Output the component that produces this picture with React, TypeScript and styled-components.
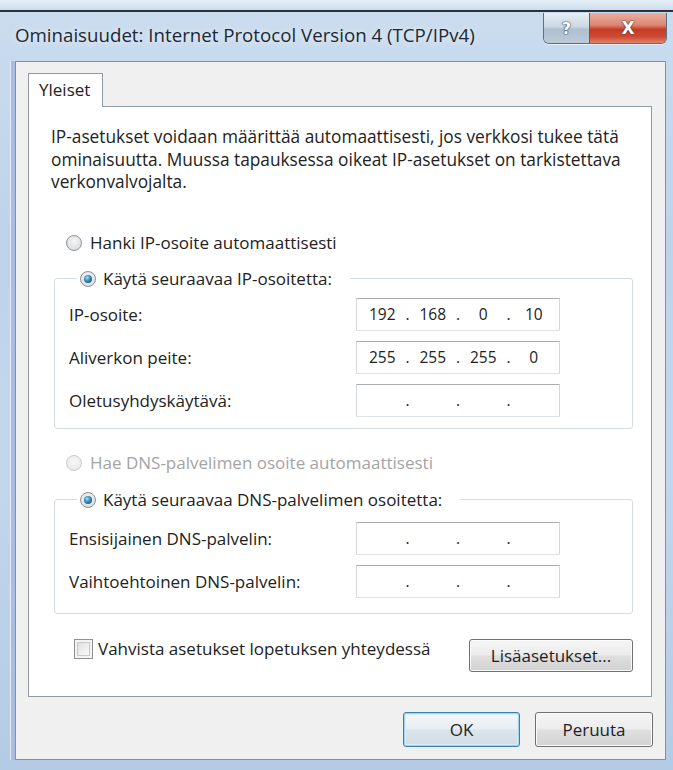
import React from "react";
import styled, { createGlobalStyle } from "styled-components";

const GlobalStyle = createGlobalStyle`
  html, body { margin: 0; padding: 0; }
  body {
    font-family: "Open Sans", "Noto Sans", "DejaVu Sans", sans-serif;
    background: #cfe0f0;
    color: #222222;
  }
  * { box-sizing: border-box; }
`;

const Screen = styled.div`
  width: 673px;
  height: 770px;
  display: flex;
  flex-direction: column;
  overflow: hidden;
`;

const TopStrip = styled.div`
  height: 12px;
  flex: none;
  background: linear-gradient(180deg, #e6eff7 0%, #cadced 100%);
  border-bottom: 2px solid #29323c;
`;

const Window = styled.div`
  flex: 1;
  display: flex;
  flex-direction: column;
  padding: 0 7px 10px 15px;
  background: linear-gradient(180deg, #cadcee 0%, #bed3ea 30%, #c3d7ec 60%, #b4cbe5 100%);
  min-height: 0;
`;

const TitleBar = styled.div`
  height: 49px;
  flex: none;
  display: flex;
  justify-content: space-between;
  align-items: flex-start;
`;

const Title = styled.div`
  margin-top: 10px;
  padding-left: 0;
  font-size: 18.7px;
  line-height: 26px;
  color: #1c2836;
  text-shadow: 0 0 6px rgba(255, 255, 255, 0.9);
  white-space: nowrap;
`;

const CaptionGroup = styled.div`
  display: flex;
  margin-top: 1px;
  margin-right: -1px;
  border: 1px solid #5d6f84;
  border-top: none;
  border-radius: 0 0 6px 6px;
  overflow: hidden;
  box-shadow: 0 1px 0 rgba(255, 255, 255, 0.6);
`;

const CaptionButton = styled.div<{ $variant: "help" | "close" }>`
  height: 30px;
  width: ${(p) => (p.$variant === "close" ? "77px" : "45px")};
  display: flex;
  align-items: center;
  justify-content: center;
  font-family: "DejaVu Sans", sans-serif;
  font-weight: bold;
  color: #ffffff;
  font-size: ${(p) => (p.$variant === "close" ? "17px" : "16px")};
  text-shadow: 0 0 2px #3a3a3a, 0 0 1px #222;
  background: ${(p) =>
    p.$variant === "close"
      ? "linear-gradient(180deg, #eab0a2 0%, #dc8672 40%, #c63a24 55%, #cf4b34 80%, #e0826c 100%)"
      : "linear-gradient(180deg, #e8eef4 0%, #ccd8e3 45%, #aebfcf 55%, #bdcbd8 100%)"};
  border-left: ${(p) => (p.$variant === "close" ? "1px solid #6b5a5a" : "none")};
`;

const Client = styled.div`
  flex: 1;
  display: flex;
  flex-direction: column;
  background: #f0f0f0;
  border: 1px solid #7d91a8;
  padding: 11px 13px 12px 12px;
  box-shadow: -4px 0 0 0 #a9bde2, -5px 0 0 0 #e4edf7;
  min-height: 0;
`;

const TabRow = styled.div`
  display: flex;
  position: relative;
  z-index: 1;
`;

const Tab = styled.div`
  width: 75px;
  height: 34px;
  background: #ffffff;
  border: 1px solid #8e9ba6;
  border-bottom: none;
  margin-bottom: -1px;
  padding-left: 10px;
  font-size: 17px;
  line-height: 32px;
`;

const Panel = styled.div`
  flex: 1;
  background: #ffffff;
  border: 1px solid #8e9ba6;
  padding: 19px 18px 0 22px;
  display: flex;
  flex-direction: column;
`;

const Intro = styled.p`
  margin: 0;
  font-size: 17.3px;
  line-height: 22.5px;
`;

const OptionRow = styled.label<{ $disabled?: boolean; $top: number }>`
  display: flex;
  align-items: center;
  gap: 8px;
  height: 24px;
  margin: ${(p) => p.$top}px 0 0 15px;
  font-size: 17px;
  color: ${(p) => (p.$disabled ? "#a4a4a4" : "#222222")};
`;

const Radio = styled.span<{ $checked?: boolean; $disabled?: boolean }>`
  width: 16px;
  height: 16px;
  flex: none;
  border-radius: 50%;
  border: 1px solid ${(p) => (p.$disabled ? "#cccccc" : "#8a949c")};
  background: ${(p) =>
    p.$disabled
      ? "radial-gradient(circle at 50% 40%, #f7f7f7 0%, #e6e6e6 100%)"
      : "radial-gradient(circle at 50% 40%, #f6f6f6 0%, #d6d6d6 100%)"};
  display: flex;
  align-items: center;
  justify-content: center;
  &::after {
    content: "";
    display: ${(p) => (p.$checked ? "block" : "none")};
    width: 8px;
    height: 8px;
    border-radius: 50%;
    background: radial-gradient(circle at 40% 35%, #a8e0f8 0%, #3a8dc0 40%, #123f62 100%);
  }
`;

const Group = styled.fieldset<{ $top: number; $padTop: number; $padBottom: number }>`
  margin: ${(p) => p.$top}px 0 0 3px;
  padding: ${(p) => p.$padTop}px 72px ${(p) => p.$padBottom}px 14px;
  border: 1px solid #d5dde3;
  border-radius: 3px;
  min-width: 0;
  display: grid;
  grid-template-columns: 1fr 204px;
  row-gap: 10px;
  align-items: center;
`;

const Legend = styled.legend`
  margin-left: 8px;
  padding: 0 18px 0 3px;
  height: 24px;
  display: flex;
  align-items: center;
  gap: 7px;
  font-size: 17px;
`;

const FieldLabel = styled.span`
  font-size: 17px;
`;

const IpBox = styled.div`
  height: 33px;
  display: flex;
  align-items: center;
  padding: 0 3px;
  background: #ffffff;
  border: 1px solid;
  border-color: #a9acb1 #d3d6db #dfe3e8 #d3d6db;
  border-radius: 1px;
  font-size: 15.5px;
`;

const Octet = styled.span`
  flex: 1;
  text-align: center;
`;

const Dot = styled.span`
  width: 6px;
  text-align: center;
`;

const BottomRow = styled.div`
  display: flex;
  justify-content: space-between;
  align-items: flex-start;
  margin-top: 23px;
`;

const CheckLabel = styled.label`
  display: flex;
  align-items: center;
  gap: 5px;
  height: 24px;
  margin-left: 23px;
  font-size: 17px;
`;

const CheckBox = styled.span`
  width: 19px;
  height: 20px;
  flex: none;
  border: 1px solid #8f8f8f;
  background: linear-gradient(135deg, #d8d8d8 0%, #f2f2f2 60%, #fafafa 100%);
  box-shadow: inset 0 0 0 2px #f4f4f4, inset 0 0 0 3px #c9c9c9;
`;

const Button = styled.div<{ $default?: boolean; $width: number; $height: number; $top: number }>`
  width: ${(p) => p.$width}px;
  height: ${(p) => p.$height}px;
  margin-top: ${(p) => p.$top}px;
  display: flex;
  align-items: center;
  justify-content: center;
  font-size: 17px;
  color: #1e1e1e;
  border: 1px solid ${(p) => (p.$default ? "#3b7fb3" : "#707070")};
  border-radius: 3px;
  background: ${(p) =>
    p.$default
      ? "linear-gradient(180deg, #f4f8fb 0%, #e8eef3 48%, #dbe4eb 52%, #d3dde5 100%)"
      : "linear-gradient(180deg, #f5f5f5 0%, #ececec 48%, #dfdfdf 52%, #d2d2d2 100%)"};
  box-shadow: ${(p) =>
    p.$default ? "inset 0 0 0 1px #9ed3f2, inset 0 0 0 2px #d8eefb" : "inset 0 0 0 1px #fbfbfb"};
`;

const Footer = styled.div`
  display: flex;
  justify-content: flex-end;
  gap: 15px;
  padding-top: 15px;
  margin-right: -1px;
`;

const Ip: React.FC<{ parts: string[] }> = ({ parts }) => (
  <IpBox>
    {parts.map((p, i) => (
      <React.Fragment key={i}>
        <Octet>{p}</Octet>
        {i < 3 && <Dot>.</Dot>}
      </React.Fragment>
    ))}
  </IpBox>
);

const empty = ["", "", "", ""];

export default function App() {
  return (
    <>
      <GlobalStyle />
      <Screen>
        <TopStrip />
        <Window>
          <TitleBar>
            <Title>Ominaisuudet: Internet Protocol Version 4 (TCP/IPv4)</Title>
            <CaptionGroup>
              <CaptionButton $variant="help">?</CaptionButton>
              <CaptionButton $variant="close">X</CaptionButton>
            </CaptionGroup>
          </TitleBar>
          <Client>
            <TabRow>
              <Tab>Yleiset</Tab>
            </TabRow>
            <Panel>
              <Intro>
                IP-asetukset voidaan määrittää automaattisesti, jos verkkosi tukee tätä
                ominaisuutta. Muussa tapauksessa oikeat IP-asetukset on tarkistettava
                verkonvalvojalta.
              </Intro>
              <OptionRow $top={37}>
                <Radio />
                Hanki IP-osoite automaattisesti
              </OptionRow>
              <Group $top={12} $padTop={7} $padBottom={11}>
                <Legend>
                  <Radio $checked />
                  Käytä seuraavaa IP-osoitetta:
                </Legend>
                <FieldLabel>IP-osoite:</FieldLabel>
                <Ip parts={["192", "168", "0", "10"]} />
                <FieldLabel>Aliverkon peite:</FieldLabel>
                <Ip parts={["255", "255", "255", "0"]} />
                <FieldLabel>Oletusyhdyskäytävä:</FieldLabel>
                <Ip parts={empty} />
              </Group>
              <OptionRow $top={22} $disabled>
                <Radio $disabled />
                Hae DNS-palvelimen osoite automaattisesti
              </OptionRow>
              <Group $top={13} $padTop={10} $padBottom={15}>
                <Legend>
                  <Radio $checked />
                  Käytä seuraavaa DNS-palvelimen osoitetta:
                </Legend>
                <FieldLabel>Ensisijainen DNS-palvelin:</FieldLabel>
                <Ip parts={empty} />
                <FieldLabel>Vaihtoehtoinen DNS-palvelin:</FieldLabel>
                <Ip parts={empty} />
              </Group>
              <BottomRow>
                <CheckLabel>
                  <CheckBox />
                  Vahvista asetukset lopetuksen yhteydessä
                </CheckLabel>
                <Button $width={164} $height={33} $top={2}>
                  Lisäasetukset...
                </Button>
              </BottomRow>
            </Panel>
            <Footer>
              <Button $default $width={117} $height={35} $top={0}>
                OK
              </Button>
              <Button $width={118} $height={35} $top={0}>
                Peruuta
              </Button>
            </Footer>
          </Client>
        </Window>
      </Screen>
    </>
  );
}
